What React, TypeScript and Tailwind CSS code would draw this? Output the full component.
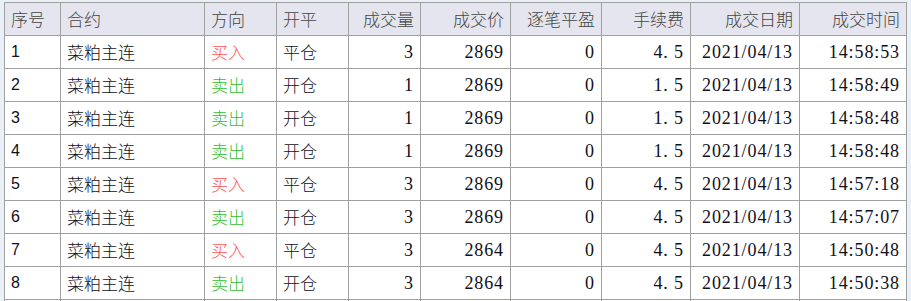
type Trade = {
  id: number;
  side: "买入" | "卖出";
  offset: "开仓" | "平仓";
  qty: number;
  price: number;
  fee: string;
  time: string;
};

const trades: Trade[] = [
  { id: 1, side: "买入", offset: "平仓", qty: 3, price: 2869, fee: "4.5", time: "14:58:53" },
  { id: 2, side: "卖出", offset: "开仓", qty: 1, price: 2869, fee: "1.5", time: "14:58:49" },
  { id: 3, side: "卖出", offset: "开仓", qty: 1, price: 2869, fee: "1.5", time: "14:58:48" },
  { id: 4, side: "卖出", offset: "开仓", qty: 1, price: 2869, fee: "1.5", time: "14:58:48" },
  { id: 5, side: "买入", offset: "平仓", qty: 3, price: 2869, fee: "4.5", time: "14:57:18" },
  { id: 6, side: "卖出", offset: "开仓", qty: 3, price: 2869, fee: "4.5", time: "14:57:07" },
  { id: 7, side: "买入", offset: "平仓", qty: 3, price: 2864, fee: "4.5", time: "14:50:48" },
  { id: 8, side: "卖出", offset: "开仓", qty: 3, price: 2864, fee: "4.5", time: "14:50:38" },
];

const cols =
  "grid grid-cols-[56px_144px_72px_72px_72px_90px_91px_89px_109px_107px]";

const cjk = "font-[family-name:'Noto_Sans_CJK_SC',sans-serif] text-[17px] font-light";
const num =
  "font-[family-name:'Liberation_Serif','Noto_Sans_CJK_SC',serif] text-[18px] tracking-[0.9px]";

const headers: { label: string; right?: boolean }[] = [
  { label: "序号" },
  { label: "合约" },
  { label: "方向" },
  { label: "开平" },
  { label: "成交量", right: true },
  { label: "成交价", right: true },
  { label: "逐笔平盈", right: true },
  { label: "手续费", right: true },
  { label: "成交日期", right: true },
  { label: "成交时间", right: true },
];

function Cell({
  children,
  right,
  className,
}: {
  children?: React.ReactNode;
  right?: boolean;
  className?: string;
}) {
  return (
    <div
      className={[
        "flex h-[33px] items-center border-r border-b border-[#a0a0a0] px-[6px] whitespace-nowrap",
        right ? "justify-end" : "justify-start",
        className ?? "",
      ].join(" ")}
    >
      {children}
    </div>
  );
}

export default function App() {
  return (
    <div className="h-[301px] w-[911px] overflow-hidden bg-[#eaf0f8] pt-[2px] pl-[4px]">
      <div className="w-[903px] border-t border-l border-[#a0a0a0] bg-white">
        <div className={cols + " bg-[#e4e5ee] text-[#444444] " + cjk}>
          {headers.map((h) => (
            <Cell key={h.label} right={h.right} className="h-[32px]">
              {h.label}
            </Cell>
          ))}
        </div>

        {trades.map((t) => (
          <div key={t.id} className={cols + " text-[#10101a]"}>
            <Cell className="font-[family-name:'Liberation_Sans',sans-serif] text-[16px]">
              {t.id}
            </Cell>
            <Cell className={cjk}>菜粕主连</Cell>
            <Cell
              className={
                cjk + (t.side === "买入" ? " text-[#ff5050]" : " text-[#2fbf2f]")
              }
            >
              {t.side}
            </Cell>
            <Cell className={cjk}>{t.offset}</Cell>
            <Cell right className={num}>{t.qty}</Cell>
            <Cell right className={num}>{t.price}</Cell>
            <Cell right className={num}>0</Cell>
            <Cell right className={num}>
              {t.fee.replace(".", ". ")}
            </Cell>
            <Cell right className={num}>2021/04/13</Cell>
            <Cell right className={num}>{t.time}</Cell>
          </div>
        ))}

        <div className={cols}>
          {headers.map((h) => (
            <Cell key={h.label} />
          ))}
        </div>
      </div>
    </div>
  );
}
